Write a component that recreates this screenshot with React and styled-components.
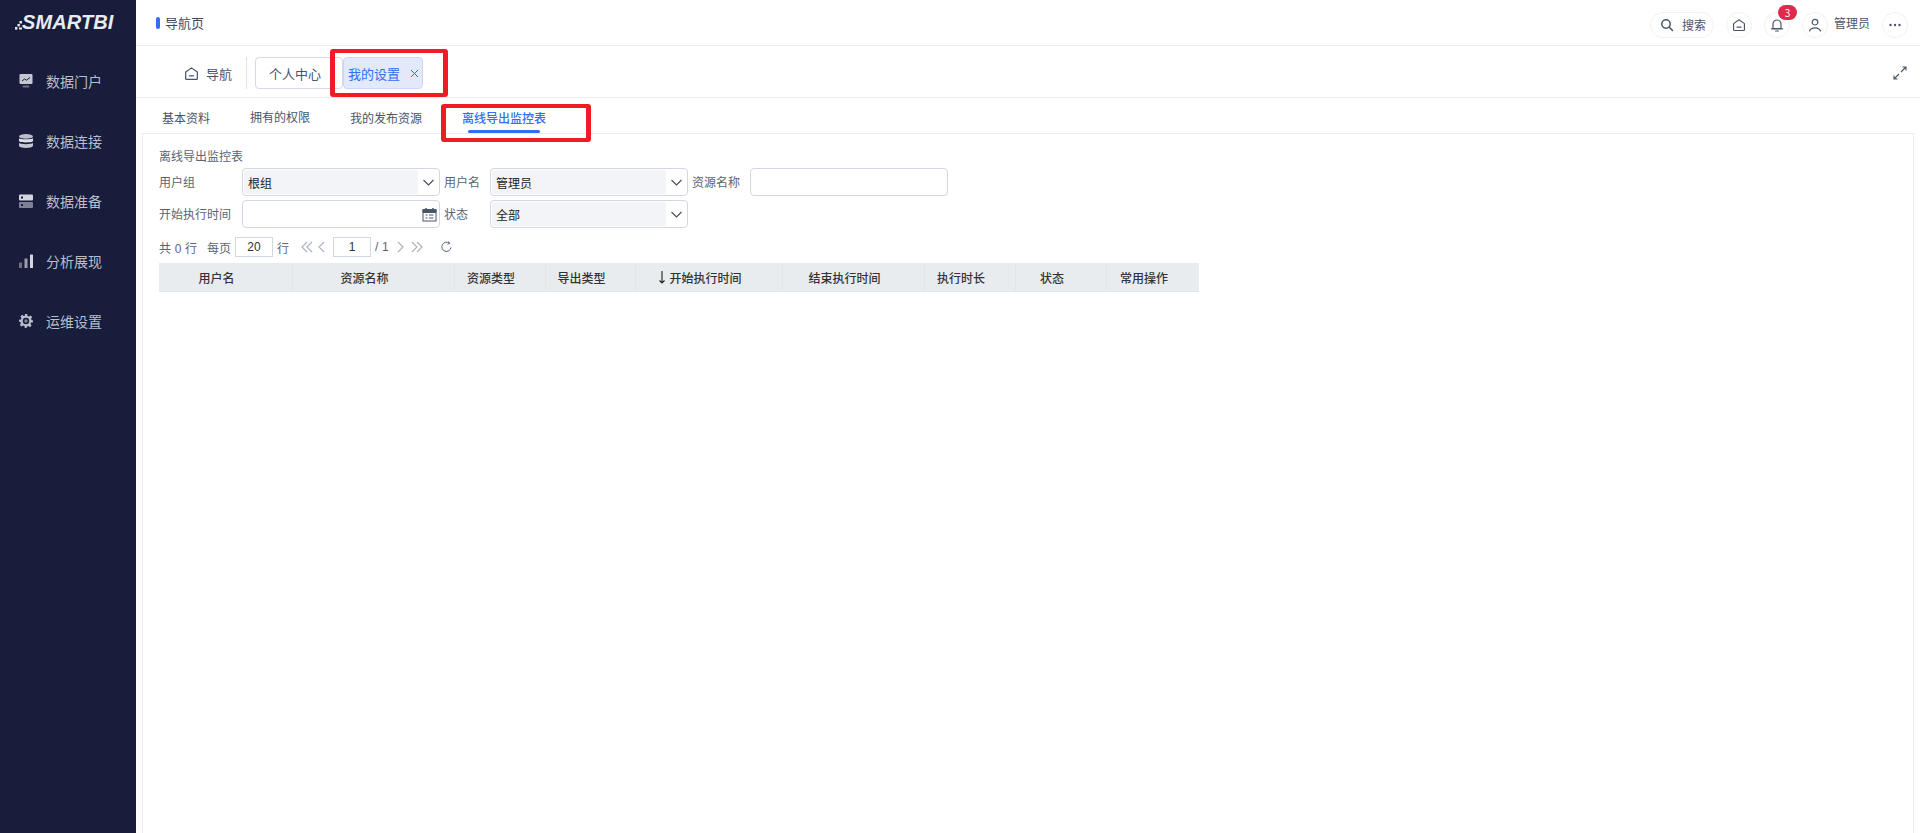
import React from 'react';
import styled, { createGlobalStyle } from 'styled-components';

const Global = createGlobalStyle`
  html, body { margin: 0; padding: 0; height: 100%; background: #fff; overflow: hidden; }
  body { font-family: "Noto Sans CJK SC", "Noto Sans", sans-serif; font-size: 12px; color: #4a5468; }
  * { box-sizing: border-box; }
`;

const Page = styled.div`
  position: relative;
  display: grid;
  grid-template-columns: 136px 1fr;
  width: 1920px;
  height: 833px;
  overflow: hidden;
`;

const Sidebar = styled.aside`
  background: #181d3b;
  display: flex;
  flex-direction: column;
`;

const Logo = styled.div`
  height: 46px;
  display: flex;
  align-items: center;
  padding: 0 0 2px 15px;
  color: #e9ebf1;
  font-family: "Liberation Sans", sans-serif;
  font-weight: 700;
  font-style: italic;
  font-size: 20px;
  letter-spacing: 0.1px;
`;

const Nav = styled.nav`
  display: flex;
  flex-direction: column;
  padding-top: 5px;
`;

const NavItem = styled.div`
  height: 60px;
  display: flex;
  align-items: center;
  padding-left: 19px;
  gap: 13px;
  color: #b9bdcc;
  font-size: 14px;
  svg { flex: none; width: 14px; height: 14px; }
`;

const Main = styled.main`
  display: flex;
  flex-direction: column;
  min-width: 0;
`;

const Header = styled.header`
  height: 46px;
  border-bottom: 1px solid #e9ebef;
  display: flex;
  align-items: center;
  justify-content: space-between;
  padding: 0 12px 0 20px;
`;

const PageTitle = styled.div`
  display: flex;
  align-items: center;
  gap: 5px;
  font-size: 13px;
  color: #3f4a5f;
  &::before {
    content: '';
    width: 4px;
    height: 12px;
    border-radius: 2px;
    background: #2f6ff0;
  }
`;

const HeaderTools = styled.div`
  display: flex;
  align-items: center;
  margin-top: 4px;
`;

const RoundBtn = styled.div`
  position: relative;
  width: 26px;
  height: 26px;
  border-radius: 13px;
  border: 1px solid #f1f2f5;
  display: flex;
  align-items: center;
  justify-content: center;
  color: #4a5468;
  margin-left: ${p => p.$gap || 0}px;
  svg { width: 14px; height: 14px; }
`;

const SearchBtn = styled(RoundBtn)`
  width: 64px;
  gap: 8px;
  justify-content: flex-start;
  padding-left: 9px;
  font-size: 12px;
`;

const Badge = styled.span`
  position: absolute;
  top: -8px;
  right: -8px;
  width: 19px;
  height: 15px;
  border-radius: 8px;
  background: #dc2b4b;
  color: #fff;
  font-size: 10px;
  line-height: 15px;
  text-align: center;
`;

const UserName = styled.span`
  margin: -5px 0 0 6px;
  font-size: 12px;
  color: #4a5468;
`;

const TabBar = styled.div`
  height: 52px;
  border-bottom: 1px solid #e9ebef;
  display: flex;
  align-items: center;
  padding: 3px 13px 0 48px;
  color: #4a5468;
  font-size: 13px;
`;

const HomeTab = styled.div`
  display: flex;
  align-items: center;
  gap: 7px;
  padding-right: 14px;
  height: 32px;
  border-right: 1px solid #dfe2e8;
  svg { width: 15px; height: 15px; }
`;

const PlainTab = styled.div`
  margin-left: 8px;
  width: 88px;
  height: 32px;
  display: flex;
  align-items: center;
  padding-left: 13px;
  border: 1px solid #d5dae4;
  border-radius: 4px;
`;

const ActiveTab = styled.div`
  width: 80px;
  height: 32px;
  display: flex;
  align-items: center;
  gap: 10px;
  padding-left: 4px;
  background: #e1e9fb;
  border: 1px solid #cbd8f5;
  border-radius: 4px;
  color: #2f6ff0;
  font-size: 13px;
  svg { width: 9px; height: 9px; }
`;

const Expand = styled.div`
  margin-left: auto;
  display: flex;
  svg { width: 14px; height: 14px; }
`;

const SubTabs = styled.div`
  height: 35px;
  display: flex;
  align-items: center;
  padding-left: 26px;
`;

const SubTab = styled.div`
  position: relative;
  width: ${p => p.$w}px;
  height: 35px;
  line-height: ${p => p.$lh || 39}px;
  font-size: 12px;
  color: ${p => (p.$active ? '#2f6ff0' : '#4a5468')};
  font-weight: ${p => (p.$active ? 500 : 400)};
  white-space: nowrap;
  ${p => p.$active && `
    &::after {
      content: '';
      position: absolute;
      left: 6px;
      width: 72px;
      bottom: 0;
      height: 3px;
      border-radius: 2px;
      background: #2f6ff0;
    }
  `}
`;

const Panel = styled.section`
  flex: 1;
  margin: 0 6px 0 6px;
  border: 1px solid #e9ebef;
  border-bottom: 0;
  padding: 14px 16px 0 16px;
`;

const PanelTitle = styled.div`
  height: 16px;
  line-height: 16px;
  font-size: 12px;
  color: #5a6375;
`;

const FormGrid = styled.div`
  margin-top: 4px;
  display: grid;
  grid-template-columns: 83px 198px 50px 198px 62px 198px;
  grid-auto-rows: 28px;
  row-gap: 4px;
  column-gap: 0;
  align-items: center;
`;

const Label = styled.label`
  font-size: 12px;
  color: #5a6375;
  margin-top: -1px;
  padding-left: ${p => p.$pad || 0}px;
  white-space: nowrap;
`;

const SelectWrap = styled.div`
  height: 28px;
  border: 1px solid #d3d7e4;
  border-radius: 4px;
  background: #fff;
  display: flex;
  align-items: center;
  padding: 1px;
  svg { flex: none; width: 15px; height: 15px; margin: 0 2px 0 3px; color: #444b5a; }
`;

const SelectValue = styled.div`
  flex: 1;
  height: 24px;
  line-height: 25px;
  background: #f3f4f8;
  border-radius: 3px;
  padding-left: 4px;
  font-size: 12px;
  color: #222;
`;

const TextInput = styled.div`
  height: 28px;
  border: 1px solid #d3d7e4;
  border-radius: 4px;
  background: #fff;
  display: flex;
  align-items: center;
  justify-content: flex-end;
  margin-top: ${p => p.$mt || 0}px;
  svg { width: 15px; height: 15px; margin-right: 2px; color: #4a5468; }
`;

const Pager = styled.div`
  margin-top: 7px;
  height: 24px;
  display: flex;
  align-items: center;
  font-family: "Liberation Sans", "Noto Sans CJK SC", sans-serif;
  font-size: 12px;
  color: #5a6375;
  word-spacing: 0.3px;
`;

const PagerGap = styled.span`
  margin-left: 10px;
`;

const PagerInput = styled.div`
  width: 38px;
  height: 20px;
  line-height: 19px;
  margin: ${p => p.$m};
  border: 1px solid #d3d7e4;
  text-align: center;
  font-size: 12px;
  color: #333;
`;

const PagerIcon = styled.svg`
  flex: none;
  width: ${p => p.$w || 12}px;
  height: 12px;
  margin-left: ${p => p.$ml || 0}px;
  color: ${p => p.$color || '#aeb3bf'};
`;

const Table = styled.div`
  margin-top: 4px;
  display: flex;
  width: 1040px;
  height: 29px;
  background: #e9ecef;
  border-bottom: 1px solid #e2e5e9;
`;

const Th = styled.div`
  width: ${p => p.$w}px;
  display: flex;
  align-items: center;
  justify-content: center;
  gap: 3px;
  padding-right: 18px;
  font-size: 12px;
  font-weight: 500;
  color: #333;
  border-right: 1px solid #e2e5e9;
  &:last-child { border-right: 0; }
  svg { width: 8px; height: 13px; }
`;

const RedBox = styled.div`
  position: absolute;
  left: ${p => p.$x}px;
  top: ${p => p.$y}px;
  width: ${p => p.$w}px;
  height: ${p => p.$h}px;
  border: solid #ee1c25;
  border-width: 4px 5px;
  border-radius: 3px;
  pointer-events: none;
`;

const LogoMark = () => (
  <svg width="7" height="14" viewBox="0 0 7 14" fill="#e9ebf1" style={{ marginTop: 10, flex: 'none' }}>
    <rect x="4.500" y="1" width="2.500" height="2.500" />
    <rect x="2.500" y="4" width="2.400" height="2.400" />
    <rect x="0" y="7" width="2.400" height="2.600" />
    <rect x="4" y="7.500" width="3" height="2" />
  </svg>
);

const IconPortal = () => (
  <svg viewBox="0 0 14 14">
    <rect x="0.5" y="0" width="13" height="10" rx="1" fill="#c4c7d2" />
    <path d="M3 7l2.500-2 2 1.200L11 3.500" stroke="#181d3b" strokeWidth="1" fill="none" />
    <rect x="3.500" y="11.500" width="7" height="2" rx="1" fill="#6d7186" />
  </svg>
);
const IconDb = () => (
  <svg viewBox="0 0 14 14">
    <ellipse cx="7" cy="2.400" rx="7" ry="2.400" fill="#b9bdcc" />
    <path d="M0 4.200c1.500 1.500 12.500 1.500 14 0v3c-1.500 1.600-12.500 1.600-14 0z" fill="#dcdee6" />
    <path d="M0 9c1.500 1.500 12.500 1.500 14 0v3c-1 2.600-13 2.600-14 0z" fill="#c4c7d2" />
  </svg>
);
const IconServer = () => (
  <svg viewBox="0 0 14 14">
    <rect y="0.500" width="14" height="6" rx="1" fill="#d4d6df" />
    <rect y="8" width="14" height="6" rx="1" fill="#7e8296" />
    <rect x="2" y="2.500" width="2" height="2" fill="#181d3b" />
    <rect x="2" y="10" width="2" height="2" fill="#181d3b" />
  </svg>
);
const IconBars = () => (
  <svg viewBox="0 0 14 14">
    <rect x="0" y="8.500" width="3" height="5.500" rx="0.600" fill="#6d7186" />
    <rect x="5.500" y="4.500" width="3" height="9.500" rx="0.600" fill="#9a9eb0" />
    <rect x="11" y="0.500" width="3" height="13.500" rx="0.600" fill="#d4d6df" />
  </svg>
);
const IconGear = () => (
  <svg viewBox="0 0 24 24" fill="#b9bdcc">
    <path fillRule="evenodd" d="M10 0h4l.7 3.400 2.100.9 3-1.900 2.800 2.800-1.900 3 .9 2.100L24 11v3l-3.400.7-.9 2.100 1.900 3-2.800 2.800-3-1.900-2.100.9L13 24h-3l-.7-3.400-2.100-.9-3 1.900-2.800-2.800 1.900-3-.9-2.100L0 13v-3l3.400-.7.9-2.100-1.900-3 2.800-2.800 3 1.900 2.100-.9zM12 6.500a5.500 5.500 0 1 0 0 11 5.500 5.500 0 0 0 0-11z" />
    <circle cx="12" cy="12" r="3" fill="#7e8296" />
  </svg>
);
const IconHome = () => (
  <svg viewBox="0 0 16 16" fill="none" stroke="currentColor" strokeWidth="1.300" strokeLinejoin="round">
    <path d="M1.800 6.400L8 2l6.200 4.400V13.500a.8.8 0 0 1-.8.8H2.600a.8.8 0 0 1-.8-.8z" />
    <path d="M5.800 10.500h4.400" strokeLinecap="round" />
  </svg>
);
const IconSearch = () => (
  <svg viewBox="0 0 14 14" fill="none" stroke="currentColor" strokeWidth="1.500" strokeLinecap="round">
    <circle cx="6" cy="6" r="4.200" />
    <path d="M9.300 9.300L12.500 12.500" />
  </svg>
);
const IconBell = () => (
  <svg viewBox="0 0 14 14" fill="none" stroke="currentColor" strokeWidth="1.200" strokeLinejoin="round">
    <path d="M3 10.500V6a4 4 0 0 1 8 0v4.500z" />
    <path d="M1.500 10.800h11" strokeLinecap="round" />
    <path d="M5.600 13h2.800" strokeLinecap="round" />
  </svg>
);
const IconUser = () => (
  <svg viewBox="0 0 14 14" fill="none" stroke="currentColor" strokeWidth="1.200" strokeLinecap="round">
    <circle cx="7" cy="4.200" r="2.800" />
    <path d="M1.500 13c1-2.400 3-3.200 5.500-3.200S11.500 10.600 12.500 13" />
  </svg>
);
const IconDots = () => (
  <svg viewBox="0 0 14 14" fill="currentColor">
    <circle cx="2.500" cy="7" r="1.200" />
    <circle cx="7" cy="7" r="1.200" />
    <circle cx="11.500" cy="7" r="1.200" />
  </svg>
);
const IconClose = () => (
  <svg viewBox="0 0 9 9" fill="none" stroke="#2f6ff0" strokeWidth="1">
    <path d="M1 1l7 7M8 1L1 8" />
  </svg>
);
const IconExpand = () => (
  <svg viewBox="0 0 14 14" fill="none" stroke="#4a5468" strokeWidth="1.100">
    <path d="M8 6l5-5M9.500 1H13v3.500" />
    <path d="M6 8l-5 5M1 9.500V13h3.500" />
  </svg>
);
const Chevron = () => (
  <svg viewBox="0 0 15 15" fill="none" stroke="currentColor" strokeWidth="1.100">
    <path d="M2.500 5l5 5 5-5" />
  </svg>
);
const IconCal = () => (
  <svg viewBox="0 0 15 15" fill="none" stroke="currentColor" strokeWidth="1">
    <rect x="1" y="2.500" width="13" height="11.500" />
    <path d="M1 3h13v2.500H1z" fill="currentColor" />
    <path d="M4 1v2M11 1v2" strokeWidth="1.500" />
    <path d="M3.500 8h2M7 8h4.500M3.500 11h2M7 11h4.500" />
  </svg>
);
const DoubleLeft = () => (
  <PagerIcon $w={12} $ml={12} viewBox="0 0 12 12" fill="none" stroke="currentColor" strokeWidth="1.200">
    <path d="M6 1L1 6l5 5M11 1L6 6l5 5" />
  </PagerIcon>
);
const Left = () => (
  <PagerIcon $w={9} $ml={4} viewBox="0 0 9 12" fill="none" stroke="currentColor" strokeWidth="1.200">
    <path d="M7 1L2 6l5 5" />
  </PagerIcon>
);
const Right = () => (
  <PagerIcon $w={9} $ml={7} viewBox="0 0 9 12" fill="none" stroke="currentColor" strokeWidth="1.200">
    <path d="M2 1l5 5-5 5" />
  </PagerIcon>
);
const DoubleRight = () => (
  <PagerIcon $w={12} $ml={6} viewBox="0 0 12 12" fill="none" stroke="currentColor" strokeWidth="1.200">
    <path d="M1 1l5 5-5 5M6 1l5 5-5 5" />
  </PagerIcon>
);
const Refresh = () => (
  <PagerIcon $w={13} $ml={17} $color="#5a6375" viewBox="0 0 12 12" fill="none" stroke="currentColor" strokeWidth="1">
    <path d="M10.500 6.500A4.600 4.600 0 1 1 8.800 2.200" />
    <path d="M8 .4l1.200 2-2.200 .8" />
  </PagerIcon>
);
const SortDown = () => (
  <svg viewBox="0 0 8 13" fill="none" stroke="#222" strokeWidth="1.100">
    <path d="M4 0v12M1.500 9.500L4 12l2.500-2.500" />
  </svg>
);

const navItems = [
  ['数据门户', IconPortal],
  ['数据连接', IconDb],
  ['数据准备', IconServer],
  ['分析展现', IconBars],
  ['运维设置', IconGear],
];

const columns = [
  ['用户名', 134],
  ['资源名称', 162],
  ['资源类型', 91],
  ['导出类型', 90],
  ['开始执行时间', 147, true],
  ['结束执行时间', 142],
  ['执行时长', 91],
  ['状态', 91],
  ['常用操作', 92],
];

export default function App() {
  return (
    <Page>
      <Global />
      <Sidebar>
        <Logo><LogoMark />SMARTBI</Logo>
        <Nav>
          {navItems.map(([label, Icon]) => (
            <NavItem key={label}><Icon />{label}</NavItem>
          ))}
        </Nav>
      </Sidebar>
      <Main>
        <Header>
          <PageTitle>导航页</PageTitle>
          <HeaderTools>
            <SearchBtn><IconSearch />搜索</SearchBtn>
            <RoundBtn $gap={12}><IconHome /></RoundBtn>
            <RoundBtn $gap={12}><IconBell /><Badge>3</Badge></RoundBtn>
            <RoundBtn $gap={12}><IconUser /></RoundBtn>
            <UserName>管理员</UserName>
            <RoundBtn $gap={12}><IconDots /></RoundBtn>
          </HeaderTools>
        </Header>
        <TabBar>
          <HomeTab><IconHome />导航</HomeTab>
          <PlainTab>个人中心</PlainTab>
          <ActiveTab>我的设置<IconClose /></ActiveTab>
          <Expand><IconExpand /></Expand>
        </TabBar>
        <SubTabs>
          <SubTab $w={88}>基本资料</SubTab>
          <SubTab $w={100} $lh={37}>拥有的权限</SubTab>
          <SubTab $w={112}>我的发布资源</SubTab>
          <SubTab $w={90} $active>离线导出监控表</SubTab>
        </SubTabs>
        <Panel>
          <PanelTitle>离线导出监控表</PanelTitle>
          <FormGrid>
            <Label>用户组</Label>
            <SelectWrap><SelectValue>根组</SelectValue><Chevron /></SelectWrap>
            <Label $pad={4}>用户名</Label>
            <SelectWrap><SelectValue>管理员</SelectValue><Chevron /></SelectWrap>
            <Label $pad={4}>资源名称</Label>
            <TextInput $mt={-1} />
            <Label>开始执行时间</Label>
            <TextInput><IconCal /></TextInput>
            <Label $pad={4}>状态</Label>
            <SelectWrap><SelectValue>全部</SelectValue><Chevron /></SelectWrap>
          </FormGrid>
          <Pager>
            共 0 行
            <PagerGap>每页</PagerGap>
            <PagerInput $m="0 4px">20</PagerInput>
            行
            <DoubleLeft /><Left />
            <PagerInput $m="0 4px 0 7px">1</PagerInput>
            / 1
            <Right /><DoubleRight /><Refresh />
          </Pager>
          <Table>
            {columns.map(([label, w, sorted]) => (
              <Th key={label} $w={w}>{sorted && <SortDown />}{label}</Th>
            ))}
          </Table>
        </Panel>
      </Main>
      <RedBox $x={330} $y={49} $w={118} $h={48} />
      <RedBox $x={441} $y={104} $w={150} $h={38} />
    </Page>
  );
}
